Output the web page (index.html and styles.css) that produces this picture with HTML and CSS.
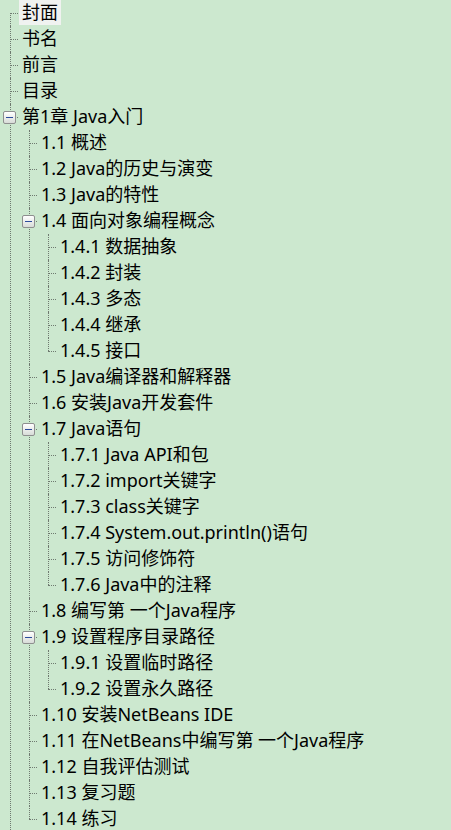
FILE: index.html
```html
<!DOCTYPE html>
<html lang="zh">
<head>
<meta charset="utf-8">
<title>目录树</title>
<link rel="stylesheet" href="styles.css">
</head>
<body>
<ul class="tree">
  <li class="first"><div class="row"><span class="label selected">封面</span></div></li>
  <li><div class="row"><span class="label">书名</span></div></li>
  <li><div class="row"><span class="label">前言</span></div></li>
  <li><div class="row"><span class="label">目录</span></div></li>
  <li class="more"><div class="row"><span class="toggle"></span><span class="label">第1章 Java入门</span></div>
    <ul>
      <li><div class="row"><span class="label">1.1 概述</span></div></li>
      <li><div class="row"><span class="label">1.2 Java的历史与演变</span></div></li>
      <li><div class="row"><span class="label">1.3 Java的特性</span></div></li>
      <li><div class="row"><span class="toggle"></span><span class="label">1.4 面向对象编程概念</span></div>
        <ul>
          <li><div class="row"><span class="label">1.4.1 数据抽象</span></div></li>
          <li><div class="row"><span class="label">1.4.2 封装</span></div></li>
          <li><div class="row"><span class="label">1.4.3 多态</span></div></li>
          <li><div class="row"><span class="label">1.4.4 继承</span></div></li>
          <li><div class="row"><span class="label">1.4.5 接口</span></div></li>
        </ul>
      </li>
      <li><div class="row"><span class="label">1.5 Java编译器和解释器</span></div></li>
      <li><div class="row"><span class="label">1.6 安装Java开发套件</span></div></li>
      <li><div class="row"><span class="toggle"></span><span class="label">1.7 Java语句</span></div>
        <ul>
          <li><div class="row"><span class="label">1.7.1 Java API和包</span></div></li>
          <li><div class="row"><span class="label">1.7.2 import关键字</span></div></li>
          <li><div class="row"><span class="label">1.7.3 class关键字</span></div></li>
          <li><div class="row"><span class="label">1.7.4 System.out.println()语句</span></div></li>
          <li><div class="row"><span class="label">1.7.5 访问修饰符</span></div></li>
          <li><div class="row"><span class="label">1.7.6 Java中的注释</span></div></li>
        </ul>
      </li>
      <li><div class="row"><span class="label">1.8 编写第 一个Java程序</span></div></li>
      <li><div class="row"><span class="toggle"></span><span class="label">1.9 设置程序目录路径</span></div>
        <ul>
          <li><div class="row"><span class="label">1.9.1 设置临时路径</span></div></li>
          <li><div class="row"><span class="label">1.9.2 设置永久路径</span></div></li>
        </ul>
      </li>
      <li><div class="row"><span class="label">1.10 安装NetBeans IDE</span></div></li>
      <li><div class="row"><span class="label">1.11 在NetBeans中编写第 一个Java程序</span></div></li>
      <li><div class="row"><span class="label">1.12 自我评估测试</span></div></li>
      <li><div class="row"><span class="label">1.13 复习题</span></div></li>
      <li><div class="row"><span class="label">1.14 练习</span></div></li>
    </ul>
  </li>
</ul>
</body>
</html>
```

FILE: styles.css
```css
html, body {
  margin: 0;
  padding: 0;
  height: 100%;
  overflow: hidden;
  background: #cce8cf;
}

.tree, .tree ul {
  list-style: none;
  margin: 0;
  padding: 0;
}

.tree li {
  position: relative;
  padding-left: 19px;
}

.tree li::before {
  content: "";
  position: absolute;
  left: 10px;
  top: 13px;
  width: 8px;
  border-top: 1px dotted #6f7a70;
}

.tree li::after {
  content: "";
  position: absolute;
  left: 10px;
  top: 0;
  bottom: 0;
  border-left: 1px dotted #6f7a70;
}

.tree li:last-child::after {
  bottom: auto;
  height: 13px;
}

.tree li.first::after {
  top: 13px;
  bottom: 0;
  height: auto;
}

.tree li.more::after {
  bottom: 0;
  height: auto;
}

.row {
  height: 26px;
  display: flex;
  align-items: flex-start;
}

.label {
  height: 25px;
  line-height: 25px;
  padding: 0 3px;
  font-family: "Noto Sans", "Noto Sans CJK SC", sans-serif;
  font-size: 18px;
  color: #000;
  white-space: nowrap;
}

.label.selected {
  background: #f0f2f0;
}

.toggle {
  position: absolute;
  left: 3px;
  top: 7px;
  width: 11px;
  height: 11px;
  border: 1px solid #8e8f8f;
  border-radius: 2px;
  background: linear-gradient(#ffffff, #d8dcd8);
  z-index: 1;
}

.toggle::after {
  content: "";
  position: absolute;
  left: 2px;
  top: 5px;
  width: 7px;
  height: 1px;
  background: #2c4c9c;
}
```
